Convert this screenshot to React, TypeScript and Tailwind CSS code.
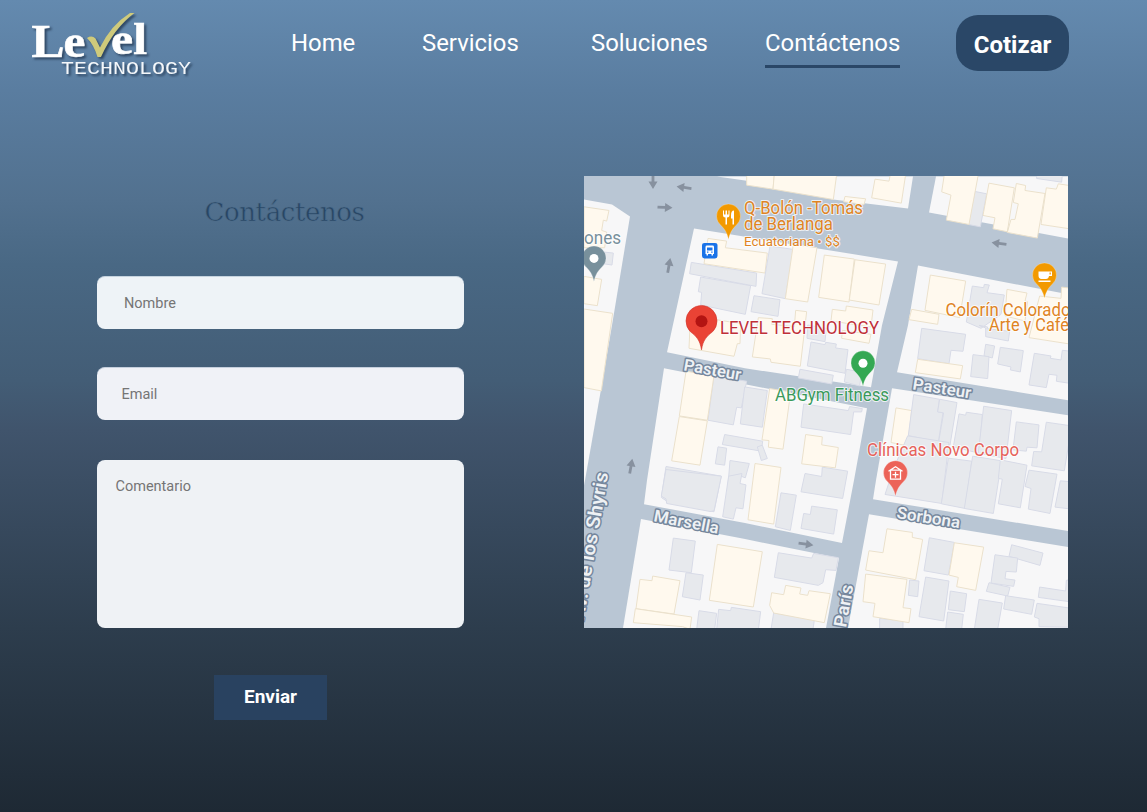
type Tile = { at: string; cream: string[]; gray: string[] };

const blocks = [
  "584,199 612,204 630,216 612,325 600,395 585,480 584,485",
  "717,176 745,180 833,199 908,208 913,176",
  "936,176 929,212 1068,238 1068,176",
  "694,228 818,248 898,261 882,325 871,387 745,368 667,352 672,329",
  "918,265 1068,294 1068,400 897,372 908,325",
  "664,368 745,384 867,408 854,480 842,543 745,523 644,504 647,480",
  "892,388 1068,415 1068,531 873,499 876,480",
  "641,519 745,539 839,558 826,628 623,628",
  "869,514 1068,547 1068,628 848,628",
];

const tiles: Tile[] = [
  {
    at: "translate(584 174) scale(.3333)",
    cream: [
      "0,97 75,108 68,140 58,137 53,168 68,173 62,220 0,220",
      "0,306 53,315 40,394 0,388",
      "0,404 86,417 52,650 0,640",
      "372,192 428,200 424,220 550,236 543,296 360,268",
      "318,455 330,425 470,448 468,508 460,508 450,546 315,522",
    ],
    gray: [
      "60,233 88,236 84,272 58,268",
      "322,264 518,296 516,336 317,298",
      "350,308 500,334 484,420 350,392 353,354 343,352",
    ],
  },
  {
    at: "translate(745 174) scale(.3333)",
    cream: [
      "5,0 88,0 84,44 5,32",
      "88,0 275,0 265,75 84,44",
      "300,66 362,73 357,90 296,82",
      "390,14 432,20 436,0 482,0 469,86 380,70",
      "145,210 216,220 188,383 121,373",
      "238,242 328,254 312,383 221,369",
      "330,256 422,269 402,392 313,377",
      "40,430 82,433 80,450 148,457 152,408 185,412 166,576 78,564 76,554 22,548",
      "262,405 302,410 304,395 384,407 378,458 258,440",
      "292,468 378,480 372,507 290,492",
    ],
    gray: [
      "75,215 145,225 121,373 51,358",
      "27,364 105,376 99,426 18,412",
      "188,452 244,462 240,502 186,492",
    ],
  },
  {
    at: "translate(905 174) scale(.3333)",
    cream: [
      "118,0 220,0 192,150 124,137 138,62 110,52",
      "252,26 328,40 307,172 264,163 270,130 234,123",
      "334,27 362,33 360,48 420,57 397,191 307,174 318,135 330,135 340,88 325,84",
      "424,40 454,44 460,28 500,34 500,164 408,150",
      "76,302 182,320 164,430 60,408",
      "20,405 102,420 98,450 12,436",
      "306,345 366,356 360,380 368,382 360,440 300,425",
      "404,365 468,372 470,338 500,342 500,510 372,490",
    ],
    gray: [
      "395,0 472,0 470,23 395,12",
      "210,51 245,58 226,157 190,150",
      "202,335 236,340 238,330 253,332 246,355 298,362 288,420 228,462 184,443",
    ],
  },
  {
    at: "translate(584 325) scale(.3333)",
    cream: [
      "306,138 390,151 370,285 286,272",
      "286,274 370,287 348,420 263,407",
    ],
    gray: [
      "390,152 488,168 472,248 458,246 448,299 372,285",
      "482,185 550,196 535,306 469,296",
      "422,328 536,348 532,378 415,358",
      "402,365 428,369 422,420 394,416",
      "520,365 535,360 550,400 532,406",
      "246,424 412,453 390,560 248,528 232,517",
      "438,406 496,415 484,458 468,452 450,515 430,506",
    ],
  },
  {
    at: "translate(745 325) scale(.3333)",
    cream: [
      "74,190 137,200 114,372 70,366 72,346 51,344",
      "182,328 232,335 230,359 280,367 271,428 170,416",
      "30,415 108,427 86,597 9,584",
      "453,248 500,256 488,362 438,352",
    ],
    gray: [
      "198,50 240,58 242,51 274,56 272,68 309,73 300,144 187,122",
      "165,132 265,150 260,176 160,158",
      "304,132 350,140 344,182 298,170",
      "176,236 310,256 314,244 352,250 350,260 326,260 317,328 168,306",
      "180,445 230,454 232,426 308,438 293,520 168,500",
    ],
  },
  {
    at: "translate(905 325) scale(.3333)",
    cream: ["38,102 173,121 166,161 31,142"],
    gray: [
      "50,9 182,27 174,78 138,75 132,115 38,100",
      "222,0 248,5 246,10 314,18 310,47 242,34 242,8",
      "242,57 269,62 262,98 237,92",
      "204,88 252,94 248,160 197,154",
      "286,66 355,76 346,140 316,134 318,125 278,116",
      "388,84 438,92 436,99 468,104 472,75 500,78 500,175 454,168 456,150 432,147 424,187 372,179",
      "26,208 103,222 98,260 114,263 100,350 10,331",
      "104,222 156,232 135,360 101,350 116,263 98,260",
      "162,266 182,270 184,261 232,268 222,384 145,365",
      "236,243 320,256 303,400 220,384",
      "334,290 402,299 396,368 366,366 364,378 324,374",
      "424,291 500,302 478,437 380,422 386,379 410,380",
      "8,332 132,352 110,535 -60,508 -34,430",
      "130,399 200,408 180,550 109,536",
      "203,393 290,407 265,565 178,550",
      "286,404 366,420 346,548 280,536 292,462 280,460",
      "372,435 456,447 435,565 370,552 378,490 360,484",
      "466,467 500,470 500,552 450,546",
    ],
  },
  {
    at: "translate(584 476) scale(.3333)",
    cream: [
      "400,205 535,227 508,393 376,373",
      "168,310 204,314 206,300 288,314 270,414 156,398",
      "154,398 323,423 318,460 296,452 148,440",
    ],
    gray: [
      "232,60 246,-20 412,0 390,104 378,106 248,82 246,68",
      "434,0 474,-8 468,22 486,26 477,98 456,95 448,129 416,122",
      "268,186 334,195 322,290 255,282",
      "306,290 358,297 348,372 295,362",
      "345,404 398,412 392,460 338,460",
      "404,400 440,404 442,394 530,407 522,470 398,460",
    ],
  },
  {
    at: "translate(745 476) scale(.3333)",
    cream: [
      "122,328 168,336 164,354 188,358 192,344 256,353 238,440 86,411 74,388 80,350 116,356",
      "426,158 502,169 502,184 533,190 512,311 362,282 372,224 414,230",
      "362,294 486,310 474,395 498,398 492,440 384,422 390,382 354,377",
    ],
    gray: [
      "108,50 154,57 136,163 91,152",
      "200,90 277,101 266,174 168,157 176,112 196,115",
      "100,230 200,246 206,232 280,245 273,283 242,281 234,320 220,328 88,304",
      "86,411 208,432 204,460 78,460",
      "404,427 474,435 474,460 404,460",
    ],
  },
  {
    at: "translate(905 476) scale(.3333)",
    cream: ["148,200 236,213 212,343 155,332 160,304 132,297"],
    gray: [
      "73,185 148,199 130,297 57,284",
      "62,303 132,315 116,435 42,422",
      "14,312 42,315 38,362 10,358",
      "136,345 185,353 178,407 130,401",
      "128,408 175,415 170,460 122,460",
      "320,206 414,231 405,268 312,241",
      "270,236 338,246 334,288 303,286 300,308 330,312 326,331 258,321",
      "252,320 315,334 308,360 244,346",
      "302,359 388,372 380,415 296,399",
      "222,370 292,381 278,460 208,460",
      "404,333 482,345 484,313 500,310 500,378 400,364",
      "396,382 500,397 500,454 402,452 402,428 388,423",
    ],
  },
];

const arrows = [
  [653, 181, 90],
  [684, 187, 188],
  [665, 207, 3],
  [669, 265, -80],
  [999, 243, 188],
  [631, 466, -80],
  [806, 544, 8],
];

function Pin({ x, y, fill, children }: { x: number; y: number; fill: string; children?: React.ReactNode }) {
  return (
    <g transform={`translate(${x} ${y})`}>
      <path
        d="M0 23C-1.500 16-4 12.500-8 8.500A12 12 0 1 1 8 8.500C4 12.500 1.500 16 0 23Z"
        fill={fill}
        stroke="#fff"
        strokeOpacity=".45"
        strokeWidth=".6"
      />
      {children}
    </g>
  );
}

function Map() {
  const halo = { stroke: "#fff", strokeOpacity: 0.75, strokeWidth: 2, paintOrder: "stroke", strokeLinejoin: "round" as const };
  const street = { fill: "#eef1f4", stroke: "#75879d", strokeWidth: 3, paintOrder: "stroke", strokeLinejoin: "round" as const, fontWeight: 600, fontSize: 16.5 };
  return (
    <svg viewBox="584 175.500 484 452.500" className="block h-full w-full font-[Roboto,sans-serif]" preserveAspectRatio="none">
      <rect x="584" y="175" width="484" height="454" fill="#b9c6d4" />
      {blocks.map((p) => (
        <polygon key={p} points={p} fill="#f7f7f8" />
      ))}
      {tiles.map((t) => (
        <g key={t.at} transform={t.at} strokeWidth="3">
          {t.gray.map((p) => (
            <polygon key={p} points={p} fill="#e7e9ed" stroke="#d8dbe7" />
          ))}
          {t.cream.map((p) => (
            <polygon key={p} points={p} fill="#fff9ee" stroke="#ebe1cc" />
          ))}
        </g>
      ))}
      {arrows.map(([x, y, r]) => (
        <path
          key={`${x}-${y}`}
          transform={`translate(${x} ${y}) rotate(${r})`}
          d="M-7.500 -1.400H0V-4.500L7.500 0L0 4.500V1.400H-7.500Z"
          fill="#87919f"
        />
      ))}

      <g {...street}>
        <text x="683" y="370" textLength="58" lengthAdjust="spacingAndGlyphs" transform="rotate(10 683 370)">Pasteur</text>
        <text x="912" y="389" textLength="59" lengthAdjust="spacingAndGlyphs" transform="rotate(9 912 389)">Pasteur</text>
        <text x="653" y="521" textLength="66" lengthAdjust="spacingAndGlyphs" transform="rotate(11 653 521)">Marsella</text>
        <text x="896" y="518" textLength="64" lengthAdjust="spacingAndGlyphs" transform="rotate(9 896 518)">Sorbona</text>
        <text x="583.500" y="621" fontSize="19" textLength="150" lengthAdjust="spacingAndGlyphs" transform="rotate(-80.500 583.500 621)">Av. de los Shyris</text>
        <text x="846" y="628" fontSize="18" textLength="43" lengthAdjust="spacingAndGlyphs" transform="rotate(-80 846 628)">París</text>
      </g>

      <Pin x={594} y={258} fill="#78909c">
        <circle r="4.500" fill="#fff" />
      </Pin>
      <Pin x={728.5} y={216} fill="#f29900">
        <path d="M-5.500 -6V-1.500Q-5.500 1-3 1V8H-1.500V1Q1 1 1 -1.500V-6H0V-2H-1.500V-6H-3V-2H-4.500V-6ZM2.500 -1Q2.500 -6 5.500 -6V8H4V2H2.500Z" fill="#fff" />
      </Pin>
      <Pin x={1044.5} y={275} fill="#f29900">
        <path d="M-6 -4H7.500V0.500H4.500Q4 3.500 1.500 3.500H-3Q-6 3.500-6 0ZM5 -2.800V-.8H6.300V-2.800ZM-6 5H6V6.500H-6Z" fill="#fff" fillRule="evenodd" />
      </Pin>
      <Pin x={863} y={363} fill="#34a853">
        <circle r="4.500" fill="#fff" />
      </Pin>
      <Pin x={895.5} y={473} fill="#ec6358">
        <path d="M-7 -2L0 -6.500L7 -2M-5 -3V6H5V-3ZM0 -1.500V4.500M-3 1.500H3" fill="none" stroke="#fff" strokeWidth="1.300" />
      </Pin>
      <g transform="translate(701.500 321)">
        <path
          d="M0 28.500C-1.500 19-5 15-11 10.500A15.500 15.500 0 1 1 11 10.500C5 15 1.500 19 0 28.500Z"
          fill="#ea4335"
          stroke="#d0352b"
          strokeWidth=".6"
        />
        <circle r="6" fill="#b31412" />
      </g>
      <rect x="702" y="242.500" width="15.500" height="15.500" rx="2.500" fill="#1a73e8" />
      <path d="M705.500 253.500V246.500Q705.500 245 707 245H712.500Q714 245 714 246.500V253.500H713V255H711.500V253.500H708V255H706.500V253.500ZM707 247V250H712.500V247ZM707 251.200V252.400H708.400V251.200ZM711.200 251.200V252.400H712.600V251.200Z" fill="#fff" fillRule="evenodd" />

      <g {...halo} fontSize="17.500">
        <text x="584" y="244" fill="#78909c" textLength="37" lengthAdjust="spacingAndGlyphs">ones</text>
        <g fill="#df8424">
          <text x="744" y="246" fontSize="13" textLength="96" lengthAdjust="spacingAndGlyphs">Ecuatoriana • $$</text>
          <text x="744" y="229.500" textLength="89" lengthAdjust="spacingAndGlyphs">de Berlanga</text>
          <text x="744" y="214" textLength="119" lengthAdjust="spacingAndGlyphs">Q-Bolón -Tomás</text>
          <text x="989" y="330.500" textLength="80" lengthAdjust="spacingAndGlyphs">Arte y Café</text>
          <text x="945.500" y="316" textLength="125" lengthAdjust="spacingAndGlyphs">Colorín Colorado</text>
        </g>
        <text x="720" y="334" fill="#c03038" textLength="159" lengthAdjust="spacingAndGlyphs">LEVEL TECHNOLOGY</text>
        <text x="775" y="401" fill="#3a9a5b" textLength="114" lengthAdjust="spacingAndGlyphs">ABGym Fitness</text>
        <text x="867" y="456" fill="#e6625a" textLength="152" lengthAdjust="spacingAndGlyphs">Clínicas Novo Corpo</text>
      </g>
    </svg>
  );
}

function Logo() {
  return (
    <svg viewBox="26 8 172 72" className="h-[72px] w-[172px] drop-shadow-[2px_2px_1px_rgba(30,50,75,0.75)]">
      <g fill="#fff" stroke="#fff" strokeWidth=".6" fontFamily="Liberation Serif, serif" fontWeight="700">
        <text x="31.500" y="57" fontSize="46" textLength="33" lengthAdjust="spacingAndGlyphs">L</text>
        <text x="63.500" y="57" fontSize="47" textLength="22" lengthAdjust="spacingAndGlyphs">e</text>
        <text x="111" y="54" fontSize="44" textLength="36" lengthAdjust="spacingAndGlyphs">el</text>
      </g>
      <path d="M87 38Q92 35 95.500 38.500L100 47.500Q111 25 130 13H134.500Q114 28 101 57H97.500Q94 45 87 38Z" fill="#cfca7b" />
      <text x="61" y="74" fill="#f4f7fa" fontFamily="Liberation Mono, monospace" fontSize="19" textLength="130" lengthAdjust="spacingAndGlyphs">TECHNOLOGY</text>
    </svg>
  );
}

const links = [
  { label: "Home", className: "ml-[93px] w-[64px]" },
  { label: "Servicios", className: "ml-[67px] w-[97px]" },
  { label: "Soluciones", className: "ml-[72px] w-[117px]" },
  { label: "Contáctenos", className: "ml-[57px] w-[135px] border-b-[3px] border-[#2a4767]" },
];

export default function App() {
  return (
    <div className="h-[812px] w-[1147px] overflow-hidden bg-[linear-gradient(180deg,#648aaf_0px,#5a7da0_90px,#52718f_200px,#496884_265px,#435d76_380px,#40546c_430px,#2d3d4d_628px,#1e2934_812px)] font-[Roboto,sans-serif]">
      <header className="flex h-[88px] items-start pt-2 pl-[26px]">
        <Logo />
        <nav className="flex pt-[18px] text-[23.9px] leading-[34px] text-white">
          {links.map((l) => (
            <a key={l.label} className={`h-[42px] whitespace-nowrap ${l.className}`}>
              {l.label}
            </a>
          ))}
        </nav>
        <button className="mt-[7px] ml-[56px] h-[56px] w-[113px] rounded-[22px] bg-[#2a4767] pt-1 text-[24px] font-bold text-white">Cotizar</button>
      </header>
      <main className="flex items-start pt-[88px] pl-[97px]">
        <form className="flex w-[367px] flex-col pt-[16px]">
          <h1 className="h-[84px] pl-[107.500px] font-['DejaVu_Serif',serif] text-[26px] leading-[41px] tracking-[-0.4px] whitespace-nowrap text-[#284664] [-webkit-text-stroke:0.6px_#4d6c8a]">Contáctenos</h1>
          <input placeholder="Nombre" className="h-[53px] rounded-lg border-t border-[#c5d3de] bg-[#eef3f7] pl-[27px] text-[14.500px] placeholder:text-[#757575]" />
          <input placeholder="Email" className="mt-[38px] h-[53px] rounded-lg border-t border-[#c5cfdd] bg-[#f0f2f7] pl-[24.500px] text-[14.500px] placeholder:text-[#757575]" />
          <textarea placeholder="Comentario" className="mt-[40px] h-[168px] resize-none rounded-lg bg-[#eff2f5] pt-[16px] pl-[18.500px] text-[14.500px] placeholder:text-[#757575]" />
          <button type="button" className="mt-[47px] ml-[117px] h-[45px] w-[113px] bg-[#294260] text-[19px] font-bold text-white">Enviar</button>
        </form>
        <section className="ml-[120px] h-[452px] w-[484px]">
          <Map />
        </section>
      </main>
    </div>
  );
}
